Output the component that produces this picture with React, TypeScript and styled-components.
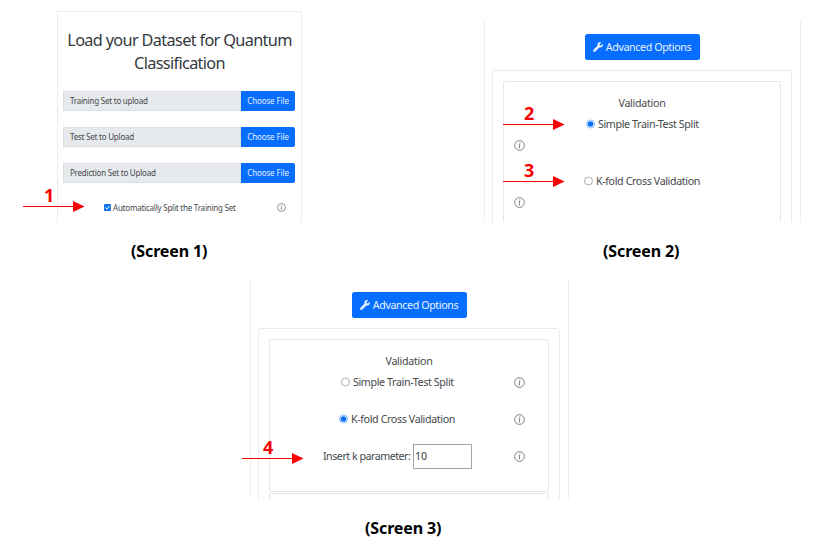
import React from "react";
import styled, { createGlobalStyle } from "styled-components";
import { FaWrench } from "react-icons/fa";

const GlobalStyle = createGlobalStyle`
  * { box-sizing: border-box; }
  body { margin: 0; background: #fff; }
`;

const Page = styled.main`
  position: relative;
  width: 821px;
  height: 550px;
  overflow: hidden;
  background: #fff;
  color: #45484b;
  font-family: "Noto Sans", "Open Sans", sans-serif;
`;

const TopRow = styled.div`
  display: flex;
  justify-content: space-between;
  height: 278px;
  padding: 0 20px 0 57px;
`;

const BottomRow = styled.div`
  padding-left: 250px;
`;

const Figure = styled.figure<{ $width: number; $top?: number }>`
  display: flex;
  flex-direction: column;
  width: ${(p) => p.$width}px;
  margin: 0;
  padding-top: ${(p) => p.$top ?? 0}px;
`;

const Caption = styled.figcaption<{ $shift?: number }>`
  margin-top: 18px;
  padding-left: ${(p) => p.$shift ?? 0}px;
  color: #000;
  font-size: 16px;
  font-weight: 700;
  line-height: 22px;
  letter-spacing: -0.12px;
  white-space: nowrap;
`;

const UploadPanel = styled.section`
  height: 211px;
  padding: 17px 6px 0 5px;
  border: 1px solid #ebeced;
  border-bottom: 0;
`;

const Title = styled.h1`
  margin: 0 -6px 16px -5px;
  color: #34383c;
  font-size: 16.3px;
  font-weight: 400;
  line-height: 23px;
  letter-spacing: -0.66px;
  text-align: center;
  white-space: nowrap;
`;

const FileRow = styled.div`
  display: flex;
  height: 20px;
  margin-bottom: 16px;
  font-size: 8px;
  line-height: 19px;
  white-space: nowrap;
`;

const FileName = styled.span`
  flex: 1;
  padding-left: 6px;
  border: 1px solid #dadee2;
  background: #e7eaed;
  line-height: 17px;
  letter-spacing: -0.22px;
`;

const FileButton = styled.button`
  width: 54px;
  padding: 0 0 1px;
  border: 0;
  border-radius: 0 2px 2px 0;
  background: #056dff;
  color: #e3efff;
  font: inherit;
  letter-spacing: -0.12px;
`;

const SplitRow = styled.label`
  display: flex;
  align-items: center;
  height: 12px;
  margin-top: 18px;
  padding: 0 9px 0 41px;
  font-size: 8px;
  letter-spacing: -0.22px;
  white-space: nowrap;

  > span { flex: 1; padding-left: 2px; }
`;

const Svg = styled.svg`
  display: block;
  flex: none;
  overflow: visible;
`;

const OptionsPanel = styled.section<{ $height: number }>`
  height: ${(p) => p.$height}px;
  padding: 14px 8px 0 7px;
  border: solid #eeeff0;
  border-width: 0 1px;
  overflow: hidden;
`;

const AdvancedButton = styled.button<{ $left: number }>`
  display: flex;
  align-items: center;
  justify-content: center;
  gap: 3px;
  width: 115px;
  height: 26px;
  margin-left: ${(p) => p.$left}px;
  padding: 0 1px 1px 0;
  border: 0;
  border-radius: 2.5px;
  background: #056dff;
  color: #e9f2ff;
  font: inherit;
  font-size: 10.7px;
  letter-spacing: -0.4px;
  white-space: nowrap;
`;

const OuterCard = styled.div`
  height: 300px;
  margin-top: 10px;
  padding: 10px 10px 0;
  border: 1px solid #eaebec;
  border-radius: 3px;
`;

const InnerCard = styled.div<{ $height?: number }>`
  height: ${(p) => p.$height ?? 200}px;
  margin-bottom: 1px;
  padding-top: 13px;
  border: 1px solid #e6e7e8;
  border-radius: 2px;
  font-size: 10.7px;
`;

const Heading = styled.div`
  height: 16px;
  line-height: 16px;
  letter-spacing: -0.3px;
  text-align: center;
`;

const OptionRow = styled.div<{ $left: number; $top: number }>`
  display: flex;
  align-items: center;
  height: 16px;
  margin-top: ${(p) => p.$top}px;
  padding: 0 23px 0 ${(p) => p.$left}px;
  gap: 3px;
  letter-spacing: -0.38px;
  line-height: 16px;
  white-space: nowrap;

  > span { flex: 1; }
`;

const InfoRow = styled.div<{ $top: number }>`
  margin-top: ${(p) => p.$top}px;
  padding-left: 10px;
`;

const ParameterLabel = styled.label`
  display: flex;
  flex: 1;
  align-items: center;
  letter-spacing: -0.5px;
`;

const ParameterName = styled.span`
  flex: none;
  width: 90px;
`;

const ParameterInput = styled.input`
  width: 59px;
  height: 25px;
  padding: 0 0 1px 1px;
  border: 1px solid #a5a5a5;
  border-radius: 0;
  background: #fff;
  color: #3d4043;
  font: inherit;
  outline: 0;
`;

const Callout = styled.div<{ $x: number; $y: number }>`
  position: absolute;
  left: ${(p) => p.$x}px;
  top: ${(p) => p.$y}px;
  width: 62px;
  color: #fa0000;
  font-size: 18px;
  font-weight: 700;
  line-height: 22px;

  > span { display: block; height: 16px; padding-left: 21px; }
`;

function Info({ size = 11 }: { size?: number }) {
  return (
    <Svg width={size} height={size} viewBox="0 0 12 12" fill="none" stroke="#64676a">
      <circle cx="6" cy="6" r="5.3" strokeWidth="0.9" />
      <path d="M5.1 5h1.1L5.5 8.7h1" strokeWidth="0.9" />
      <circle cx="6.4" cy="3.2" r="0.65" fill="#64676a" stroke="none" />
    </Svg>
  );
}

function Radio({ checked = false }: { checked?: boolean }) {
  return (
    <Svg width="9" height="9" viewBox="0 0 9 9">
      <circle cx="4.5" cy="4" r="4" fill="#fff" stroke={checked ? "#69aaff" : "#96999c"} strokeWidth="0.8" />
      {checked && <circle cx="4.5" cy="4" r="2.8" fill="#0870f5" />}
    </Svg>
  );
}

function Checkbox() {
  return (
    <Svg width="7" height="7" viewBox="0 0 7 7">
      <rect width="7" height="7" rx="1" fill="#1476e8" />
      <path d="M1.5 3.6 2.9 5 5.6 2" fill="none" stroke="#fff" strokeWidth="1" />
    </Svg>
  );
}

function Pointer({ number, x, y }: { number: number; x: number; y: number }) {
  return (
    <Callout $x={x} $y={y}>
      <span>{number}</span>
      <Svg width="62" height="12" viewBox="0 0 62 12">
        <path d="M0 6.5h52" stroke="#fa0000" />
        <path d="M50 1v11l11.5-5.5z" fill="#fa0000" />
      </Svg>
    </Callout>
  );
}

function Advanced({ left }: { left: number }) {
  return (
    <AdvancedButton $left={left}>
      <FaWrench size={10} />
      <span>Advanced Options</span>
    </AdvancedButton>
  );
}

const files = ["Training Set to upload", "Test Set to Upload", "Prediction Set to Upload"];

export default function App() {
  return (
    <Page>
      <GlobalStyle />
      <TopRow>
        <Figure $width={245} $top={11}>
          <UploadPanel>
            <Title>Load your Dataset for Quantum<br />Classification</Title>
            {files.map((file) => (
              <FileRow key={file}>
                <FileName>{file}</FileName>
                <FileButton>Choose File</FileButton>
              </FileRow>
            ))}
            <SplitRow>
              <Checkbox />
              <span>Automatically Split the Training Set</span>
              <Info size={9} />
            </SplitRow>
          </UploadPanel>
          <Caption $shift={74}>(Screen 1)</Caption>
        </Figure>

        <Figure $width={317} $top={20}>
          <OptionsPanel $height={202}>
            <Advanced left={93} />
            <OuterCard>
              <InnerCard>
                <Heading>Validation</Heading>
                <OptionRow $left={82} $top={5}>
                  <Radio checked />
                  <span>Simple Train-Test Split</span>
                </OptionRow>
                <InfoRow $top={8}><Info /></InfoRow>
                <OptionRow $left={80} $top={22}>
                  <Radio />
                  <span>K-fold Cross Validation</span>
                </OptionRow>
                <InfoRow $top={8}><Info /></InfoRow>
              </InnerCard>
            </OuterCard>
          </OptionsPanel>
          <Caption $shift={119}>(Screen 2)</Caption>
        </Figure>
      </TopRow>

      <BottomRow>
        <Figure $width={319}>
          <OptionsPanel $height={221}>
            <Advanced left={94} />
            <OuterCard>
              <InnerCard $height={153}>
                <Heading>Validation</Heading>
                <OptionRow $left={71} $top={5}>
                  <Radio />
                  <span>Simple Train-Test Split</span>
                  <Info />
                </OptionRow>
                <OptionRow $left={69} $top={21}>
                  <Radio checked />
                  <span>K-fold Cross Validation</span>
                  <Info />
                </OptionRow>
                <OptionRow $left={53} $top={21}>
                  <ParameterLabel>
                    <ParameterName>Insert k parameter:</ParameterName>
                    <ParameterInput defaultValue="10" />
                  </ParameterLabel>
                  <Info />
                </OptionRow>
              </InnerCard>
              <InnerCard />
            </OuterCard>
          </OptionsPanel>
          <Caption $shift={115}>(Screen 3)</Caption>
        </Figure>
      </BottomRow>

      <Pointer number={1} x={23} y={184} />
      <Pointer number={2} x={503} y={102} />
      <Pointer number={3} x={503} y={159} />
      <Pointer number={4} x={242} y={436} />
    </Page>
  );
}
